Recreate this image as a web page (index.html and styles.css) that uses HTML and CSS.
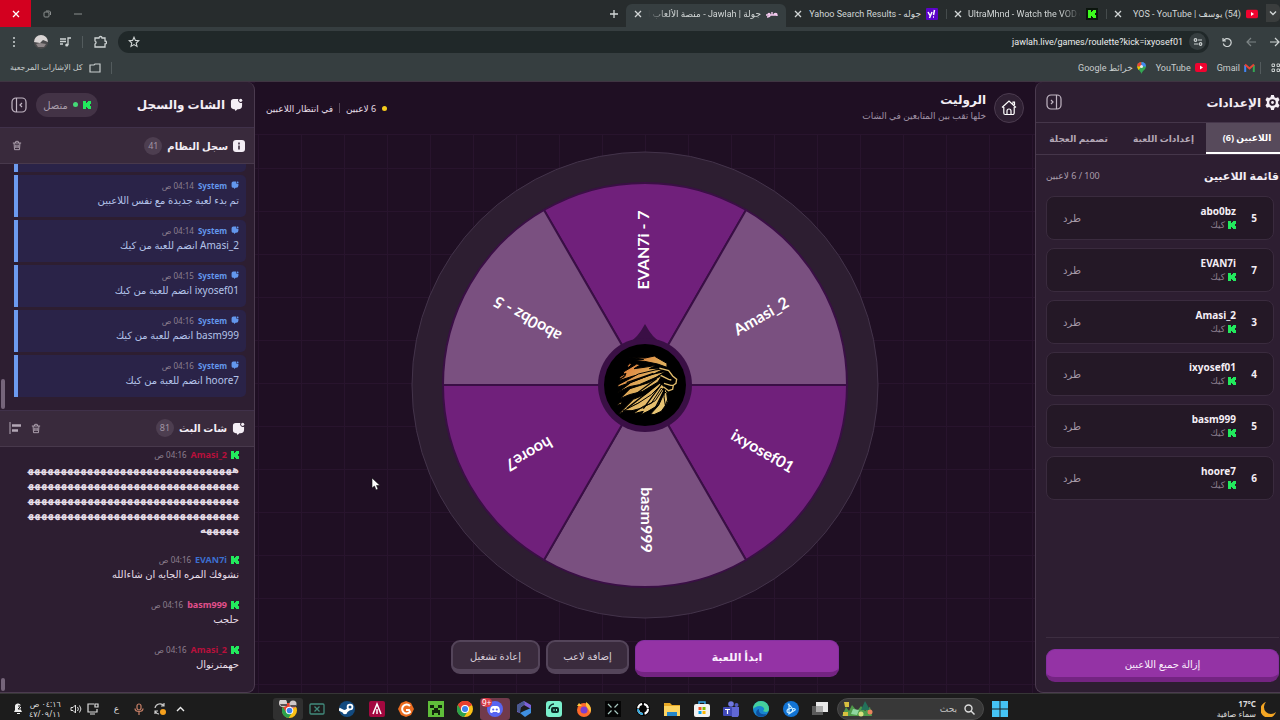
FILE: index.html
```html
<!DOCTYPE html>
<html lang="ar" dir="rtl">
<head>
    <meta charset="UTF-8">
    <meta name="viewport" content="width=device-width, initial-scale=1.0">
    <title>جولة | Jawlah - منصة الألعاب</title>
    <link rel="stylesheet" href="styles.css">
</head>
<body>

    <!-- Shared icons -->
    <svg class="symbols" aria-hidden="true">
        <symbol id="kick" viewBox="0 0 8 8"><path d="M0 0H3V2H4V1H5V0H8V3H7V5H8V8H5V7H4V6H3V8H0Z"/></symbol>
        <symbol id="youtube" viewBox="0 0 12 9"><rect width="12" height="9" rx="2" fill="#f0032f"/><path d="M5 2.5v4l3-2z" fill="#fff"/></symbol>
        <symbol id="x" viewBox="0 0 10 10"><path d="M2 2l6 6M8 2l-6 6" fill="none" stroke="currentColor" stroke-width="1.3"/></symbol>
        <symbol id="chat" viewBox="0 0 14 14"><path d="M4 1h5a3 3 0 0 0 4 4v3a4 4 0 0 1-4 4H8l-2 2-1-2H4a3 3 0 0 1-3-3V4a3 3 0 0 1 3-3z"/><circle cx="11.500" cy="2.500" r="1.700"/></symbol>
        <symbol id="trash" viewBox="0 0 12 12"><path d="M1 3h10M4 3l.5-2h3L8 3M2.500 3l.5 8h6l.5-8M4.500 5v4M6 5v4M7.500 5v4" fill="none" stroke="currentColor" stroke-width="1.1"/></symbol>
        <symbol id="chrome" viewBox="0 0 16 16"><circle cx="8" cy="8" r="8" fill="#fbc116"/><path d="M8 8L1 4a8 8 0 0 1 14 0z" fill="#e8402f"/><path d="M8 8L1 4a8 8 0 0 0 6 12l4-6z" fill="#2ba24c"/><path d="M8 4h7a8 8 0 0 0-14 0l3.500 6z" fill="#e8402f"/><circle cx="8" cy="8" r="4" fill="#fff"/><circle cx="8" cy="8" r="3" fill="#3c80f0"/></symbol>
    </svg>

    <!-- Browser tabs -->
    <div class="tab-strip">
        <button class="tab-search" aria-label="بحث في علامات التبويب"><svg width="8" height="8" viewBox="0 0 8 8"><path d="M1 2.500l3 3 3-3" fill="none" stroke="currentColor" stroke-width="1.4"/></svg></button>
        <div class="tab">
            <svg class="fav" viewBox="0 0 12 9"><use href="#youtube"/></svg>
            <span class="tab-title">(54) يوسف | YOS - YouTube</span>
            <button aria-label="إغلاق"><svg width="10" height="10"><use href="#x"/></svg></button>
        </div>
        <div class="tab">
            <svg class="fav kick-fav" viewBox="0 0 12 12"><rect width="12" height="12" fill="#0b150d"/><use href="#kick" x="2" y="2" width="8" height="8"/></svg>
            <span class="tab-title fade-right" dir="ltr">UltraMhnd - Watch the VOD on Kick</span>
            <button aria-label="إغلاق"><svg width="10" height="10"><use href="#x"/></svg></button>
        </div>
        <div class="tab no-line">
            <svg class="fav" viewBox="0 0 12 12"><rect width="12" height="12" rx="1" fill="#5c04c8"/><path d="M2 4l2 3.500M6 4L3.500 10M8.500 2l-1 5M7 9h1" stroke="#fff" stroke-width="1.5"/></svg>
            <span class="tab-title">جوله - Yahoo Search Results</span>
            <button aria-label="إغلاق"><svg width="10" height="10"><use href="#x"/></svg></button>
        </div>
        <div class="tab active">
            <svg class="fav" viewBox="0 0 12 12"><path d="M0 7h11M2 7c0-2 2-2 2 0s-2 2-3 2M6 7V4M8 7c0-2 3-2 3 0v1" fill="none" stroke="#f3c9ee" stroke-width="1.4"/></svg>
            <span class="tab-title fade-left">جولة | Jawlah - منصة الألعاب التفاعلية</span>
            <button aria-label="إغلاق"><svg width="10" height="10"><use href="#x"/></svg></button>
        </div>
        <button class="new-tab" aria-label="علامة تبويب جديدة"><svg width="10" height="10" viewBox="0 0 10 10"><path d="M5 1v8M1 5h8" stroke="currentColor" stroke-width="1.3"/></svg></button>
        <div class="window-buttons">
            <button aria-label="تصغير"><svg width="8" height="8" viewBox="0 0 8 8"><path d="M0 4h8" stroke="currentColor"/></svg></button>
            <button aria-label="استعادة"><svg width="8" height="8" viewBox="0 0 8 8"><rect x="1" y="2" width="5" height="5" rx="1" fill="none" stroke="currentColor"/><path d="M3 1h3.500l1 1V5" fill="none" stroke="currentColor"/></svg></button>
            <button class="close-window" aria-label="إغلاق النافذة"><svg width="10" height="10"><use href="#x"/></svg></button>
        </div>
    </div>

    <!-- Address bar -->
    <div class="toolbar">
        <div class="nav-buttons">
            <button aria-label="رجوع"><svg width="10" height="10" viewBox="0 0 10 10"><path d="M0 5h9M5 1l4 4-4 4" fill="none" stroke="currentColor" stroke-width="1.2"/></svg></button>
            <button class="dim" aria-label="تقدم"><svg width="10" height="10" viewBox="0 0 10 10"><path d="M10 5H1M5 1L1 5l4 4" fill="none" stroke="currentColor" stroke-width="1.2"/></svg></button>
            <button aria-label="تحديث"><svg width="10" height="10" viewBox="0 0 10 10"><path d="M1 1v3h3M1.500 4a4 4 0 1 1-.2 2.500" fill="none" stroke="currentColor" stroke-width="1.2"/></svg></button>
        </div>
        <div class="address">
            <button class="site-info" aria-label="معلومات الموقع"><svg width="10" height="10" viewBox="0 0 10 10"><g fill="none" stroke="currentColor" stroke-width="1.2"><circle cx="2.500" cy="3" r="1.300"/><path d="M5 3h4M1 7h4"/><circle cx="7.500" cy="7" r="1.300"/></g></svg></button>
            <input type="text" dir="ltr" aria-label="العنوان" value="jawlah.live/games/roulette?kick=ixyosef01">
            <button class="star" aria-label="إشارة مرجعية"><svg width="12" height="12" viewBox="0 0 12 12"><path d="M6 1.200l1.400 3.200 3.400.3-2.600 2.300.8 3.400L6 8.600l-3 1.800.8-3.400L1.200 4.700l3.400-.3z" fill="none" stroke="currentColor" stroke-width="1.1"/></svg></button>
        </div>
        <button class="tool" aria-label="الإضافات"><svg width="13" height="13" viewBox="0 0 13 13"><path d="M1 3h4a1.500 1.500 0 0 1 3 0h3v3a1.500 1.500 0 0 1 0 3v3H1V9a1.600 1.600 0 0 0 0-3z" fill="none" stroke="currentColor" stroke-width="1.3"/></svg></button>
        <span class="tool-line"></span>
        <button class="tool" aria-label="الوسائط"><svg width="12" height="12" viewBox="0 0 12 12"><path d="M1 3h6M1 5.500h6M1 8h3M9 9V2h3" fill="none" stroke="currentColor" stroke-width="1.3"/><circle cx="7.800" cy="9" r="1.600" fill="currentColor"/></svg></button>
        <button class="tool" aria-label="الملف الشخصي"><svg width="14" height="14" viewBox="0 0 14 14"><circle cx="7" cy="7" r="7" fill="#4b4a4c"/><path d="M0 7a7 7 0 0 1 14 0L9 5 6 8z" fill="#d9d4d4"/><path d="M2 9l4-1 6 1-2 3H4z" fill="#8e8688"/></svg></button>
        <button class="tool" aria-label="القائمة"><svg width="4" height="12" viewBox="0 0 4 12" fill="currentColor"><circle cx="2" cy="2" r="1"/><circle cx="2" cy="6" r="1"/><circle cx="2" cy="10" r="1"/></svg></button>
    </div>

    <!-- Bookmarks -->
    <div class="bookmarks">
        <button class="apps" aria-label="التطبيقات"><svg width="9" height="9" viewBox="0 0 9 9"><path d="M1 1h2.500v2.500H1zM6 1h2.500v2.500H6zM1 6h2.500v2.500H1zM6 6h2.500v2.500H6z" fill="none" stroke="currentColor"/></svg></button>
        <span class="tool-line"></span>
        <a href="#"><svg width="11" height="9" viewBox="0 0 11 9"><path d="M1.200 9V2" stroke="#4285f4" stroke-width="2"/><path d="M9.800 9V2" stroke="#34a853" stroke-width="2"/><path d="M1 1.500l4.500 4 4.500-4" fill="none" stroke="#ea4335" stroke-width="2"/></svg>Gmail</a>
        <a href="#"><svg width="12" height="9"><use href="#youtube"/></svg>YouTube</a>
        <a href="#"><svg width="9" height="12" viewBox="0 0 9 12"><path d="M4.500 12C4 9 0 7.500 0 4.500a4.500 4.500 0 0 1 9 0c0 3-4 4.500-4.500 7.500z" fill="#34a853"/><path d="M0 4.500A4.500 4.500 0 0 1 4.500 0v4.500z" fill="#ea4335"/><path d="M4.500 0A4.500 4.500 0 0 1 9 4.500H4.500z" fill="#4285f4"/><path d="M0 4.500h4.500L1.500 8z" fill="#fbbc04"/><circle cx="4.500" cy="4.500" r="1.500" fill="#eee"/></svg>خرائط Google</a>
        <span class="tool-line last-line"></span>
        <a href="#" class="all-bookmarks"><svg width="12" height="10" viewBox="0 0 12 10"><path d="M1 2h4l1-1h5v8H1z" fill="none" stroke="currentColor" stroke-width="1.2"/></svg>كل الإشارات المرجعية</a>
    </div>

    <!-- Game page -->
    <div class="game-page">

        <aside class="panel settings">
            <div class="settings-head">
                <svg width="15" height="15" viewBox="0 0 16 16"><path fill-rule="evenodd" fill="#f4eef5" d="M6.500 0h3l.6 2.300 1.600.9L14 2.500l1.500 2.700L14 7v2l1.500 1.800L14 13.500l-2.300-.7-1.600.9L9.500 16h-3l-.6-2.300-1.600-.9-2.300.7L.5 10.800 2 9V7L.5 5.200 2 2.500l2.300.7 1.600-.9zM8 4.500a3.500 3.500 0 1 0 0 7 3.500 3.500 0 0 0 0-7z"/><circle cx="8" cy="8" r="1.500" fill="#f4eef5"/></svg>
                <h2>الإعدادات</h2>
                <button class="collapse" aria-label="طي"><svg width="16" height="16" viewBox="0 0 16 16"><g fill="none" stroke="currentColor" stroke-width="1.200"><rect x="1" y="1" width="14" height="14" rx="4"/><path d="M10.500 1v14M5 6l2 2-2 2"/></g></svg></button>
            </div>
            <div class="settings-tabs">
                <button class="selected">اللاعبين (6)</button>
                <button>إعدادات اللعبة</button>
                <button>تصميم العجلة</button>
            </div>
            <div class="list-head">
                <h3>قائمة اللاعبين</h3>
                <span>100 / 6 لاعبين</span>
            </div>
            <ul class="players">
                <li><b class="count">5</b><div class="who"><b>abo0bz</b><small><svg class="k"><use href="#kick"/></svg>كيك</small></div><button>طرد</button></li>
                <li><b class="count">7</b><div class="who"><b>EVAN7i</b><small><svg class="k"><use href="#kick"/></svg>كيك</small></div><button>طرد</button></li>
                <li><b class="count">3</b><div class="who"><b>Amasi_2</b><small><svg class="k"><use href="#kick"/></svg>كيك</small></div><button>طرد</button></li>
                <li><b class="count">4</b><div class="who"><b>ixyosef01</b><small><svg class="k"><use href="#kick"/></svg>كيك</small></div><button>طرد</button></li>
                <li><b class="count">5</b><div class="who"><b>basm999</b><small><svg class="k"><use href="#kick"/></svg>كيك</small></div><button>طرد</button></li>
                <li><b class="count">6</b><div class="who"><b>hoore7</b><small><svg class="k"><use href="#kick"/></svg>كيك</small></div><button>طرد</button></li>
            </ul>
            <div class="settings-foot">
                <button class="primary">إزالة جميع اللاعبين</button>
            </div>
        </aside>

        <main>
            <header class="game-head">
                <a href="#" class="home" aria-label="الرئيسية"><svg width="16" height="16" viewBox="0 0 16 16"><path d="M1 7.500L8 1l7 6.500M12 3.500V2h1.500v3M2.800 7v6A1.500 1.500 0 0 0 4.300 14.500h7.400a1.500 1.500 0 0 0 1.500-1.500V7M6 14v-3a2 2 0 0 1 4 0v3" fill="none" stroke="#fff" stroke-width="1.200"/></svg></a>
                <div class="game-title">
                    <h1>الروليت</h1>
                    <p>خلها تقب بين المتابعين في الشات</p>
                </div>
                <div class="game-status">
                    <i class="dot yellow"></i>
                    <span>6 لاعبين</span>
                    <i class="bar"></i>
                    <span>في انتظار اللاعبين</span>
                </div>
            </header>

            <div class="wheel-area">
                <svg class="wheel" viewBox="-234 -234 468 468" direction="ltr">
                    <circle r="233" fill="#2d1e31" stroke="#43334a"/>
                    <g stroke="#3a0f45" stroke-width="2">
                        <path d="M0 0L-101-175A202 202 0 0 1 101-175Z" fill="#70207b"/>
                        <path d="M0 0L101-175A202 202 0 0 1 202 0Z" fill="#7a5080"/>
                        <path d="M0 0L202 0A202 202 0 0 1 101 175Z" fill="#70207b"/>
                        <path d="M0 0L101 175A202 202 0 0 1-101 175Z" fill="#7a5080"/>
                        <path d="M0 0L-101 175A202 202 0 0 1-202 0Z" fill="#70207b"/>
                        <path d="M0 0L-202 0A202 202 0 0 1-101-175Z" fill="#7a5080"/>
                    </g>
                    <g class="names">
                        <text x="135" y="4" transform="rotate(-90)">EVAN7i - 7</text>
                        <text x="135" y="4" transform="rotate(-30)">Amasi_2</text>
                        <text x="135" y="4" transform="rotate(30)">ixyosef01</text>
                        <text x="135" y="4" transform="rotate(90)">basm999</text>
                        <text x="135" y="4" transform="rotate(150)">hoore7</text>
                        <text x="135" y="4" transform="rotate(210)">abo0bz - 5</text>
                    </g>
                    <path d="M0-61Q8-46 16-43H-16Q-8-46 0-61Z" fill="#3a0f45"/>
                    <circle r="47" fill="#3a0f45"/>
                    <circle r="41" fill="#000"/>
                    <!-- lion -->
                    <defs>
                        <linearGradient id="gold" gradientUnits="userSpaceOnUse" x1="650" y1="660" x2="770" y2="790"><stop offset="0" stop-color="#e0803c"/><stop offset=".4" stop-color="#dfae5c"/><stop offset="1" stop-color="#e9c878"/></linearGradient>
                    </defs>
                    <g fill="url(#gold)" stroke="#000" stroke-width="3" transform="scale(.333) translate(-705 -719)">
                        <path d="M655 635l50 3 28-6 10 6 28 16v12l-28-10-40-8-30-2 28-4z"/>
                        <path d="M652 662l8-8 4 4-8 8zM640 680l40-24 12 2-20 12 30-4 38-6-22 10 34-2-40 16-42 8-44 14 18-16zM630 694l18-10-4 10-16 8z"/>
                        <path d="M625 718l60-32 50-12 30-4-34 16-46 16-64 24zM622 742l40-30 60-24 46-10-30 18-50 22-30 6z"/>
                        <path d="M630 760l30-30 56-18 40-22-12 20-46 28-40 10zM624 776l12-8-2 8-12 4zM624 808l46-46 38-16 40-34 8 8-30 34-50 24z"/>
                        <path d="M640 796l44-22 40-26 32-32 6 10-26 40-40 22-30 8zM668 806l30-22 26-10 30-46 8 8-18 44-30 18-22 10 8-10zM722 806l24-26 18-40 6 4 4 26-20 28-22 10zM764 728l8 14 2 18-8 20-4-26z"/>
                        <path d="M640 774L740 700M650 790l100-78M700 790l56-76M735 790l30-60M650 712l80-28" fill="none" stroke-width="4"/>
                        <path d="M748 668l28 8 12 16 12 10-2 12-8 6-2 12-12 4-16-12M752 690l24 12 8 2M762 714l20 6 8 0" fill="none" stroke="#e3bd6c" stroke-width="4"/>
                    </g>
                </svg>
            </div>

            <div class="actions">
                <button class="primary start">ابدأ اللعبة</button>
                <button class="secondary add">إضافة لاعب</button>
                <button class="secondary again">إعادة تشغيل</button>
            </div>
        </main>

        <aside class="panel chat">
            <div class="chat-head">
                <svg width="13" height="13" fill="#f4eef5"><use href="#chat"/></svg>
                <h2>الشات والسجل</h2>
                <span class="connected"><svg class="k"><use href="#kick"/></svg><i class="dot green"></i>متصل</span>
                <button class="collapse" aria-label="طي"><svg width="16" height="16" viewBox="0 0 16 16"><g fill="none" stroke="currentColor" stroke-width="1.200"><rect x="1" y="1" width="14" height="14" rx="4"/><path d="M5.500 1v14M11 6L9 8l2 2"/></g></svg></button>
            </div>

            <div class="section-head">
                <svg width="12" height="12" viewBox="0 0 12 12"><rect width="12" height="12" rx="3" fill="#f4eef5"/><path d="M6 2.500v2M6 5.500v4" stroke="#3a2b3d" stroke-width="1.600"/></svg>
                <h3>سجل النظام</h3>
                <span class="badge">41</span>
                <button class="section-btn" aria-label="مسح السجل"><svg width="10" height="11"><use href="#trash"/></svg></button>
            </div>
            <div class="log system-log">
                <article></article>
                <article><p class="meta"><svg class="sys"><use href="#chat"/></svg><b>System</b><time>04:14 ص</time></p><p>تم بدء لعبة جديدة مع نفس اللاعبين</p></article>
                <article><p class="meta"><svg class="sys"><use href="#chat"/></svg><b>System</b><time>04:14 ص</time></p><p>Amasi_2 انضم للعبة من كيك</p></article>
                <article><p class="meta"><svg class="sys"><use href="#chat"/></svg><b>System</b><time>04:15 ص</time></p><p>ixyosef01 انضم للعبة من كيك</p></article>
                <article><p class="meta"><svg class="sys"><use href="#chat"/></svg><b>System</b><time>04:16 ص</time></p><p>basm999 انضم للعبة من كيك</p></article>
                <article><p class="meta"><svg class="sys"><use href="#chat"/></svg><b>System</b><time>04:16 ص</time></p><p>hoore7 انضم للعبة من كيك</p></article>
                <i class="thumb tall"></i>
            </div>

            <div class="section-head">
                <svg width="13" height="13" fill="#f4eef5"><use href="#chat"/></svg>
                <h3>شات البث</h3>
                <span class="badge">81</span>
                <button class="section-btn" aria-label="مسح الشات"><svg width="10" height="11"><use href="#trash"/></svg></button>
                <button aria-label="محاذاة"><svg width="12" height="12" viewBox="0 0 12 12"><path d="M1 0v12" stroke="currentColor"/><path d="M3 3.500h9M3 8.500h6" stroke="currentColor" stroke-width="2.500"/></svg></button>
            </div>
            <div class="log live-chat">
                <article>
                    <p class="meta"><svg class="k"><use href="#kick"/></svg><b class="red">Amasi_2</b><time>04:16 ص</time></p>
                    <p class="laugh">هههههههههههههههههههههههههههههههه&zwj;<br>&zwj;هههههههههههههههههههههههههههههههه&zwj;<br>&zwj;هههههههههههههههههههههههههههههههه&zwj;<br>&zwj;هههههههههههههههههههههههههههههههه&zwj;<br>&zwj;هههههه</p>
                </article>
                <article><p class="meta"><svg class="k"><use href="#kick"/></svg><b class="blue">EVAN7i</b><time>04:16 ص</time></p><p>نشوفك المره الجايه ان شاءالله</p></article>
                <article><p class="meta"><svg class="k"><use href="#kick"/></svg><b class="pink">basm999</b><time>04:16 ص</time></p><p>حلجب</p></article>
                <article><p class="meta"><svg class="k"><use href="#kick"/></svg><b class="red">Amasi_2</b><time>04:16 ص</time></p><p>حهمترنوال</p></article>
                <i class="thumb"></i>
            </div>
        </aside>
    </div>

    <!-- Windows taskbar -->
    <div class="taskbar">
        <div class="weather">
            <svg width="16" height="16" viewBox="0 0 16 16"><path d="M5 1a8 8 0 1 0 10 10A7 7 0 0 1 5 1z" fill="#f5a623"/></svg>
            <p><b>17°C</b><br>سماء صافية</p>
        </div>
        <button aria-label="ابدأ"><svg width="16" height="16" viewBox="0 0 16 16"><path d="M0 0h7.500v7.500H0zM8.500 0H16v7.500H8.500zM0 8.500h7.500V16H0zM8.500 8.500H16V16H8.500z" fill="#45c3f5"/></svg></button>
        <label class="search">
            <svg width="11" height="11" viewBox="0 0 11 11"><circle cx="4.500" cy="4.500" r="3.500" fill="none" stroke="#ddd" stroke-width="1.400"/><path d="M7 7l3.500 3.500" stroke="#ddd" stroke-width="1.400"/></svg>
            <input type="text" placeholder="بحث" aria-label="بحث">
            <svg width="32" height="16" viewBox="0 0 32 16"><path d="M1 15l4-9 3 4 3-6 5 6 4-5 4 5 5-4 2 9z" fill="#4f9a4a"/><path d="M3 1h5v5H4zM2 11h5v4H2z" fill="#d8c040"/><path d="M12 8l6 1-2 5-6-1z" fill="#8fd6a0"/><path d="M24 0l5 9h-9z" fill="#23705a"/><circle cx="29" cy="11" r="2.500" fill="#e8855c"/><circle cx="20" cy="13" r="2.500" fill="#d8e080"/></svg>
        </label>
        <div class="apps-row">
            <button aria-label="عرض المهام"><svg viewBox="0 0 16 16"><rect x="0" y="5" width="11" height="9" fill="#5a5a5a"/><rect x="4" y="1" width="12" height="10" fill="#e8e8e8"/><rect x="4" y="5" width="7" height="6" fill="#aaa"/></svg></button>
            <button aria-label="Battle.net"><svg viewBox="0 0 16 16"><circle cx="8" cy="8" r="8" fill="#1173d4"/><path d="M6 3v10l6-4c2-2-8-3-8 1s8 1 5-3-5-4-3-4z" fill="none" stroke="#c9ecff" stroke-width="1.200"/></svg></button>
            <button aria-label="Edge"><svg viewBox="0 0 16 16"><circle cx="8" cy="8" r="8" fill="#1885d0"/><path d="M0 8a8 8 0 0 1 16 0c0 4-5 3-6 2 3-2 0-5-3-5-4 0-6 2-7 3z" fill="#45cf9c"/><path d="M6 8c-1 4 3 6 8 5a8 8 0 0 1-9 2c-3-2-2-6 1-7z" fill="#0d4f9e"/></svg></button>
            <button aria-label="Teams"><svg viewBox="0 0 16 16"><circle cx="8" cy="3" r="2.800" fill="#7078e0"/><circle cx="13.500" cy="4" r="2" fill="#5159c0"/><path d="M3 6h13v6a4 4 0 0 1-8 2z" fill="#6067d4"/><rect x="0" y="6" width="9" height="9" rx="1" fill="#4049b8"/><path d="M2 8.500h5M4.500 8.500V13" stroke="#fff" stroke-width="1.200"/></svg></button>
            <button aria-label="Store"><svg viewBox="0 0 16 16"><path d="M5 4V1h6v3" fill="none" stroke="#36a6e8" stroke-width="1.500"/><rect y="3" width="16" height="13" rx="2" fill="#f2f2f2"/><path d="M4.500 6h3v3h-3z" fill="#f25022"/><path d="M8.500 6h3v3h-3z" fill="#7fba00"/><path d="M4.500 10h3v3h-3z" fill="#00a4ef"/><path d="M8.500 10h3v3h-3z" fill="#ffb900"/></svg></button>
            <button aria-label="الملفات"><svg viewBox="0 0 16 16"><path d="M0 2h6l2 2h8v11H0z" fill="#e8a825"/><path d="M0 5h16v10H0z" fill="#fcd462"/><path d="M3 11h10v4H3z" fill="#2586c8"/></svg></button>
            <button aria-label="Overlay"><svg viewBox="0 0 16 16"><circle cx="8" cy="8" r="7" fill="#050505"/><circle cx="8" cy="8" r="5" fill="none" stroke="#fff" stroke-width="2" stroke-dasharray="6 2"/><path d="M8 13a5 5 0 0 1-5-5" fill="none" stroke="#2aa8e0" stroke-width="2"/></svg></button>
            <button aria-label="X"><svg viewBox="0 0 16 16"><rect width="16" height="16" fill="#050505"/><path d="M3 3l3.500 3.500M13 3L9.500 6.500M3 13l3.500-3.500M13 13L9.500 9.500" stroke="#a8c8c0" stroke-width="1.200"/></svg></button>
            <button aria-label="Firefox"><svg viewBox="0 0 16 16"><circle cx="8" cy="9" r="7" fill="#ff6a2b"/><path d="M10 1c5 3 6 8 4 11-1-5-5-5-4-11zM1 5l2-3 3 3z" fill="#ffc53d"/><circle cx="8" cy="9" r="3.500" fill="#7b3fd0"/></svg></button>
            <button aria-label="Streamlabs"><svg viewBox="0 0 16 16"><rect width="16" height="16" rx="3" fill="#7af0cc"/><rect x="5" y="6" width="8" height="6" rx="2" fill="#0c2a26"/><path d="M3 8a5 5 0 0 1 5-5" fill="none" stroke="#0c2a26" stroke-width="1.400"/><path d="M8 8v2M10.500 8v2" stroke="#7af0cc"/></svg></button>
            <button aria-label="Office"><svg viewBox="0 0 16 16"><path d="M8 0l7 4v4l-7-4-4 3v5L1 11V4z" fill="#7d62d8"/><path d="M4 12l4-2 7-3v5l-6 4z" fill="#3f8fe0"/><path d="M1 4l7-4 1 3-4 3-1 6-3-2z" fill="#4a5a90"/></svg></button>
            <button class="alert" aria-label="Discord"><svg viewBox="0 0 16 16"><circle cx="8" cy="8" r="8" fill="#5865f2"/><path d="M3 11c0-4 1-6 3-6h4c2 0 3 2 3 6-2 2-3 0-3 0H6s-1 2-3 0z" fill="#fff"/><circle cx="6.200" cy="8.500" r="1.100" fill="#5865f2"/><circle cx="9.800" cy="8.500" r="1.100" fill="#5865f2"/></svg><span class="notice" dir="ltr">9+</span></button>
            <button aria-label="Chrome"><svg viewBox="0 0 16 16"><use href="#chrome"/></svg></button>
            <button aria-label="Minecraft"><svg viewBox="0 0 16 16"><rect width="16" height="16" fill="#5fbf3a"/><path d="M2 4h4v3H2zM10 4h4v3h-4zM6 7h4v2h2v5h-2v-2H6v2H4V9h2z" fill="#12240c"/></svg></button>
            <button aria-label="Curse"><svg viewBox="0 0 16 16"><path d="M8 0l5 2 3 6-3 6-5 2-5-2-3-6 3-6z" fill="#ec6c1f"/><path d="M12 5a4.500 4.500 0 1 0 0 6l-1-2H8" fill="none" stroke="#fff" stroke-width="2"/></svg></button>
            <button aria-label="Launcher"><svg viewBox="0 0 16 16"><rect width="16" height="16" rx="2" fill="#a3083f"/><path d="M4 13L8 3l4 10M8 8v5" fill="none" stroke="#fff" stroke-width="1.500"/></svg></button>
            <button aria-label="Steam"><svg viewBox="0 0 16 16"><circle cx="8" cy="8" r="8" fill="#124a80"/><path d="M0 8l6 3 4-3" stroke="#fff" stroke-width="3" fill="none"/><circle cx="11" cy="6" r="3.300" fill="#fff"/><circle cx="11" cy="6" r="1.500" fill="#124a80"/><circle cx="6" cy="11" r="2.300" fill="#fff"/></svg></button>
            <button aria-label="Capture"><svg viewBox="0 0 16 16"><rect x="1" y="3" width="14" height="10" rx="1" fill="none" stroke="#428a7c" stroke-width="1.300"/><path d="M5.500 5.500l5 5M10.500 5.500l-5 5" stroke="#428a7c" stroke-width="1.300"/></svg></button>
            <button class="open" aria-label="Chrome"><svg viewBox="0 0 18 18"><use href="#chrome" x="3" y="3" width="15" height="15"/><circle cx="4" cy="3" r="4" fill="#d8d2d2"/><path d="M1 4h7v2H2z" fill="#5b5154"/><circle cx="14" cy="4" r="3.500" fill="#cfc8c8"/><path d="M11 5h6v2h-5z" fill="#5b5154"/></svg></button>
        </div>
        <div class="tray">
            <svg width="9" height="9" viewBox="0 0 9 9"><path d="M1 6l3.500-3.500L8 6" fill="none" stroke="#eee" stroke-width="1.400"/></svg>
            <svg width="12" height="12" viewBox="0 0 12 12"><path d="M1 5a5 5 0 0 1 9-2M10 0v3H7M1 11V8h3M1 8c1 2 2 3 4 3" fill="none" stroke="#ccc" stroke-width="1.200"/><circle cx="9" cy="9" r="3" fill="#f5a01d"/></svg>
            <svg width="10" height="12" viewBox="0 0 10 12"><rect x="3" y="1" width="4" height="6" rx="2" fill="none" stroke="#c98068" stroke-width="1.200"/><path d="M1 5.500c0 4 8 4 8 0M5 9v3" fill="none" stroke="#c98068" stroke-width="1.200"/></svg>
            <span class="lang">ع</span>
            <svg width="12" height="12" viewBox="0 0 12 12"><path d="M7 1H1v8h9V6M3 11h5M8 1h3v3H8z" fill="none" stroke="#ddd" stroke-width="1.200"/></svg>
            <svg class="speaker" width="12" height="12" viewBox="0 0 12 12"><path d="M1 4.500h2L5.500 2v8L3 7.500H1zM7.500 4a3 3 0 0 1 0 4M9.500 2.500a5.500 5.500 0 0 1 0 7" fill="none" stroke="#ddd"/></svg>
            <p class="clock">٠٤:١٦ ص<br>٤٧/٠٩/١١</p>
            <svg width="10" height="12" viewBox="0 0 10 12"><path d="M1 9l1-2V4a3 3 0 0 1 6-1v4l1 2zM4 10h3v1H4z" fill="#eee"/><path d="M5 3h3L5 6h3" stroke="#1c1c1c" fill="none"/></svg>
        </div>
    </div>

    <svg class="cursor" width="10" height="14" viewBox="0 0 10 14"><path d="M1 1v10l2.500-2 1.500 4 2-1-1.500-3.500H9z" fill="#fff" stroke="#111" stroke-width=".6"/></svg>
</body>
</html>
```

FILE: styles.css
```css
/* General Styles */
* {
    box-sizing: border-box;
}
body {
    margin: 0;
    height: 100vh;
    display: flex;
    flex-direction: column;
    overflow: hidden;
    background: #1c1c1c;
    color: #f4eef5;
    font-family: "Noto Sans", "DejaVu Sans", sans-serif;
    font-size: 10px;
}
h1, h2, h3, p, ul {
    margin: 0;
    padding: 0;
}
button {
    display: flex;
    align-items: center;
    justify-content: center;
    padding: 0;
    border: 0;
    background: none;
    color: inherit;
    font: inherit;
    cursor: pointer;
}
input {
    min-width: 0;
    padding: 0;
    border: 0;
    outline: 0;
    background: none;
    color: inherit;
    font: inherit;
}
a {
    color: inherit;
    text-decoration: none;
}
svg {
    flex: none;
}
.symbols {
    position: absolute;
    width: 0;
    height: 0;
}

/* Browser tabs */
.tab-strip, .toolbar, .bookmarks {
    font-family: Roboto, "DejaVu Sans", sans-serif;
    font-size: 9px;
}
.tab-strip {
    flex: none;
    height: 27px;
    display: flex;
    background: #272c2d;
    color: #d2d6d6;
}
.tab-search {
    width: 14px;
    height: 18px;
    margin-top: 4px;
    border-radius: 0 5px 5px 0;
    background: #3a3d3d;
}
.tab {
    width: 160px;
    display: flex;
    align-items: center;
    gap: 5px;
    padding: 0 8px 0 7px;
    background: linear-gradient(#454b4c, #454b4c) left center / 1px 10px no-repeat;
}
.tab.no-line {
    background: none;
}
.tab.active {
    margin-top: 4px;
    padding-bottom: 4px;
    border-radius: 6px 6px 0 0;
    background: #363e40;
}
.fav {
    width: 12px;
    height: 12px;
}
.kick-fav {
    fill: #3dfa1e;
}
.tab-title {
    flex: 1;
    overflow: hidden;
    white-space: nowrap;
}
.fade-right {
    mask-image: linear-gradient(to left, transparent, #000 20px);
}
.fade-left {
    mask-image: linear-gradient(to right, transparent, #000 20px);
}
.new-tab {
    width: 24px;
}
.window-buttons {
    display: flex;
    margin-right: auto;
    color: #8b8f8f;
}
.window-buttons button {
    width: 31px;
}
.window-buttons .close-window {
    background: #d3001f;
    color: #fff;
}

/* Address bar */
.toolbar {
    flex: none;
    height: 29px;
    display: flex;
    align-items: center;
    padding-left: 12px;
    background: #363e40;
    color: #ced3d3;
}
.nav-buttons {
    display: flex;
    gap: 14px;
    margin-left: 13px;
}
.dim {
    color: #7d8485;
}
.address {
    flex: 1;
    height: 22px;
    display: flex;
    align-items: center;
    gap: 6px;
    padding: 0 3px 0 10px;
    margin-left: 11px;
    border-radius: 11px;
    background: #202829;
}
.site-info {
    width: 17px;
    height: 17px;
    border-radius: 50%;
    background: #363e40;
}
.address input {
    flex: 1;
    text-align: right;
    color: #eceeee;
}
.tool {
    margin-left: 11px;
}
.tool:last-child {
    margin-left: 0;
    margin-right: 7px;
}
.tool-line {
    width: 1px;
    height: 12px;
    margin-left: 11px;
    background: #535b5d;
}

/* Bookmarks */
.bookmarks {
    flex: none;
    height: 25px;
    display: flex;
    align-items: center;
    padding: 0 0 2px 10px;
    background: #363e40;
    color: #c8cdcd;
}
.bookmarks .apps + .tool-line {
    margin: 0 10px 0 5px;
}
.bookmarks a {
    display: flex;
    align-items: center;
    gap: 4px;
    margin-left: 10px;
}
.bookmarks .last-line {
    margin: 0 auto 0 10px;
}
.bookmarks .all-bookmarks {
    gap: 6px;
    margin-left: 0;
    font-size: 8px;
}

/* Game page */
.game-page {
    flex: 1;
    min-height: 0;
    display: flex;
    border-top: 1px solid #3f3442;
    background-color: #1f0f23;
    background-image:
        linear-gradient(#28142d 1px, transparent 1px),
        linear-gradient(to right, #28142d 1px, transparent 1px);
    background-size: 43px 43px;
}
.panel {
    flex: none;
    display: flex;
    flex-direction: column;
    border: 1px solid #4b3b4f;
    border-top: 0;
    background: #2d1e31;
}
h2 {
    font-size: 12px;
}
h3 {
    font-size: 11px;
}
.collapse {
    margin-right: auto;
    color: #c2b6c4;
}
.k {
    width: 8px;
    height: 8px;
    fill: #22e95d;
}
.dot {
    width: 5px;
    height: 5px;
    border-radius: 50%;
}
.yellow {
    background: #f5cb1c;
}
.green {
    background: #45d977;
}

/* Settings panel */
.settings {
    width: 245px;
    border-right: 0;
    border-radius: 8px 0 0 8px;
}
.settings-head {
    height: 41px;
    display: flex;
    align-items: center;
    gap: 4px;
    padding-left: 10px;
    border-bottom: 1px solid #45364a;
}
.settings-tabs {
    height: 32px;
    display: flex;
    border-bottom: 1px solid #45364a;
    color: #b3a7b5;
    font-size: 9px;
    font-weight: bold;
}
.settings-tabs button {
    flex: 1 1 85px;
}
.settings-tabs .selected {
    flex-basis: 74px;
    padding-left: 8px;
    border-bottom: 2px solid #fff;
    background: #574a5b;
    color: #fff;
}
.list-head {
    height: 41px;
    display: flex;
    align-items: center;
    justify-content: space-between;
    padding: 0 1px 0 10px;
    color: #a99dab;
    font-size: 9px;
}
.list-head h3 {
    color: #f4eef5;
}
.players {
    flex: 1;
    display: flex;
    flex-direction: column;
    gap: 8px;
    padding: 0 6px 0 10px;
    list-style: none;
}
.players li {
    height: 44px;
    display: flex;
    align-items: center;
    padding: 0 16px;
    border: 1px solid #3a2b3e;
    border-radius: 8px;
    background: #241826;
}
.count {
    width: 6px;
    margin-left: 15px;
}
.who {
    line-height: 13px;
}
.who b {
    display: block;
    font-size: 10px;
}
.who small {
    display: flex;
    align-items: center;
    gap: 3px;
    color: #8d8090;
    font-size: 9px;
}
.players button {
    margin-right: auto;
    color: #a599a8;
}
.settings-foot {
    padding: 11px 0 10px;
    margin: 0 1px 0 10px;
    border-top: 1px solid #3d2e41;
}
.primary {
    border: 1px solid #8530a0;
    border-bottom: 5px solid #742482;
    border-radius: 9px;
    background: #9433a5;
    color: #fbeefd;
}
.settings-foot .primary {
    width: 100%;
    height: 33px;
}

/* Game area */
main {
    flex: 1;
    min-width: 0;
    display: flex;
    flex-direction: column;
}
.game-head {
    height: 53px;
    display: flex;
    align-items: center;
    gap: 8px;
    padding: 0 11px;
    border-bottom: 1px solid #28142d;
    background: #1f0f23;
}
.home {
    width: 30px;
    height: 30px;
    display: flex;
    align-items: center;
    justify-content: center;
    border: 1px solid #4b3b4f;
    border-radius: 50%;
    background: #2f2033;
}
h1 {
    font-size: 12px;
    line-height: 16px;
}
.game-title p {
    line-height: 16px;
    color: #a093a6;
    font-size: 9px;
}
.game-status {
    display: flex;
    align-items: center;
    gap: 6px;
    margin-right: auto;
    color: #e6dde7;
    font-size: 9px;
}
.bar {
    width: 1px;
    height: 10px;
    background: #594a5d;
}
.wheel-area {
    flex: 1;
    min-height: 0;
    display: flex;
    align-items: center;
    justify-content: center;
    padding-bottom: 6px;
}
.wheel {
    width: 468px;
    height: 468px;
}
.names {
    fill: #fff;
    font-family: Lato, sans-serif;
    font-size: 16px;
    font-weight: bold;
    text-anchor: middle;
}
.actions {
    display: flex;
    justify-content: center;
    align-items: flex-start;
    gap: 6px;
    padding-bottom: 16px;
}
.start {
    width: 204px;
    height: 37px;
    font-size: 11px;
    font-weight: bold;
}
.secondary {
    height: 34px;
    border: 2px solid #54455a;
    border-bottom-width: 5px;
    border-radius: 9px;
    background: #3a2b3d;
    color: #d8ced9;
}
.add {
    width: 83px;
}
.again {
    width: 89px;
}

/* Chat panel */
.chat {
    width: 255px;
    border-left: 0;
    border-radius: 0 8px 8px 0;
}
.chat-head {
    flex: none;
    height: 45px;
    display: flex;
    align-items: center;
    gap: 5px;
    padding: 0 11px;
}
.connected {
    width: 62px;
    height: 24px;
    display: flex;
    align-items: center;
    justify-content: center;
    gap: 5px;
    margin-right: auto;
    border-radius: 12px;
    background: #433346;
    color: #a99dab;
}
.chat-head .collapse {
    margin-right: 4px;
}
.section-head {
    flex: none;
    height: 37px;
    display: flex;
    align-items: center;
    gap: 5px;
    padding: 0 9px;
    border-top: 1px solid #40314a;
    border-bottom: 1px solid #48394c;
    background: #392a3c;
    color: #b3a7b5;
}
.section-head h3 {
    color: #f4eef5;
    font-size: 10px;
}
.badge {
    width: 18px;
    height: 18px;
    border-radius: 9px;
    background: #4d3e50;
    color: #a094a3;
    font-size: 9px;
    line-height: 18px;
    text-align: center;
}
.section-btn {
    margin-right: auto;
    margin-left: 3px;
}
.section-btn + button {
    margin-right: 2px;
}
.log {
    position: relative;
    flex: 1 1 0;
    min-height: 0;
    display: flex;
    flex-direction: column;
    justify-content: flex-end;
    overflow: hidden;
}
.log article {
    flex: none;
}
.log p {
    line-height: 15px;
    white-space: nowrap;
}
.log .meta {
    display: flex;
    align-items: center;
    gap: 4px;
    color: #8d8090;
    font-size: 8px;
}
.system-log {
    gap: 3px;
    padding: 0 8px 0 14px;
}
.system-log article {
    height: 42px;
    padding: 3px 7px;
    border-left: 4px solid #6c9bef;
    border-radius: 0 5px 5px 0;
    background: #2a2348;
    color: #b4c4ea;
}
.system-log article:last-of-type {
    margin-bottom: 13px;
}
.system-log .meta b {
    color: #6397ec;
}
.sys {
    width: 8px;
    height: 8px;
    fill: #6397ec;
}
.live-chat {
    gap: 15px;
    padding: 0 15px;
    color: #e6dde7;
}
.live-chat article:last-of-type {
    margin-bottom: 20px;
}
.live-chat .meta b {
    font-size: 9px;
}
.laugh {
    font-weight: bold;
}
.red {
    color: #b8103c;
}
.blue {
    color: #3c6fd0;
}
.pink {
    color: #e0508c;
}
.thumb {
    position: absolute;
    left: 1px;
    bottom: 1px;
    width: 4px;
    height: 13px;
    border-radius: 2px;
    background: #75657a;
}
.tall {
    height: 30px;
}

/* Taskbar */
.taskbar {
    flex: none;
    height: 27px;
    display: flex;
    align-items: center;
    padding: 4px 3px 0 13px;
    border-top: 1px solid #363636;
    background: #1c1c1c;
    color: #ddd;
    font-size: 8px;
    line-height: 10px;
}
.weather {
    width: 245px;
    display: flex;
    align-items: center;
    gap: 5px;
    margin-left: 24px;
}
.search {
    width: 147px;
    height: 22px;
    display: flex;
    align-items: center;
    gap: 7px;
    padding: 0 8px 0 3px;
    margin: 0 8px 0 2px;
    border: 1px solid #4a4a4a;
    border-radius: 11px;
    background: #383838;
    font-size: 9px;
}
.search input {
    flex: 1;
}
.search input::placeholder {
    color: #c4c4c4;
}
.apps-row {
    width: 562px;
    display: grid;
    grid-template-columns: repeat(19, 1fr);
}
.apps-row button {
    position: relative;
    height: 22px;
}
.apps-row svg {
    width: 16px;
    height: 16px;
}
.apps-row .open {
    border-radius: 3px;
    background: #303030;
}
.apps-row .open svg {
    width: 18px;
    height: 18px;
}
.apps-row .alert {
    border-radius: 3px;
    background: #713a4c;
}
.notice {
    position: absolute;
    top: 0;
    left: 1px;
    padding: 0 1px;
    border-radius: 5px;
    background: #d83a48;
    color: #fff;
    font-size: 8px;
    line-height: 9px;
}
.tray {
    display: flex;
    align-items: center;
    gap: 10px;
    margin-right: auto;
}
.lang {
    padding: 0 5px;
    font-size: 9px;
}
.tray .speaker {
    margin-right: -5px;
}
.clock {
    margin-left: -4px;
    margin-right: -1px;
}

.cursor {
    position: absolute;
    left: 371px;
    top: 477px;
}
```
